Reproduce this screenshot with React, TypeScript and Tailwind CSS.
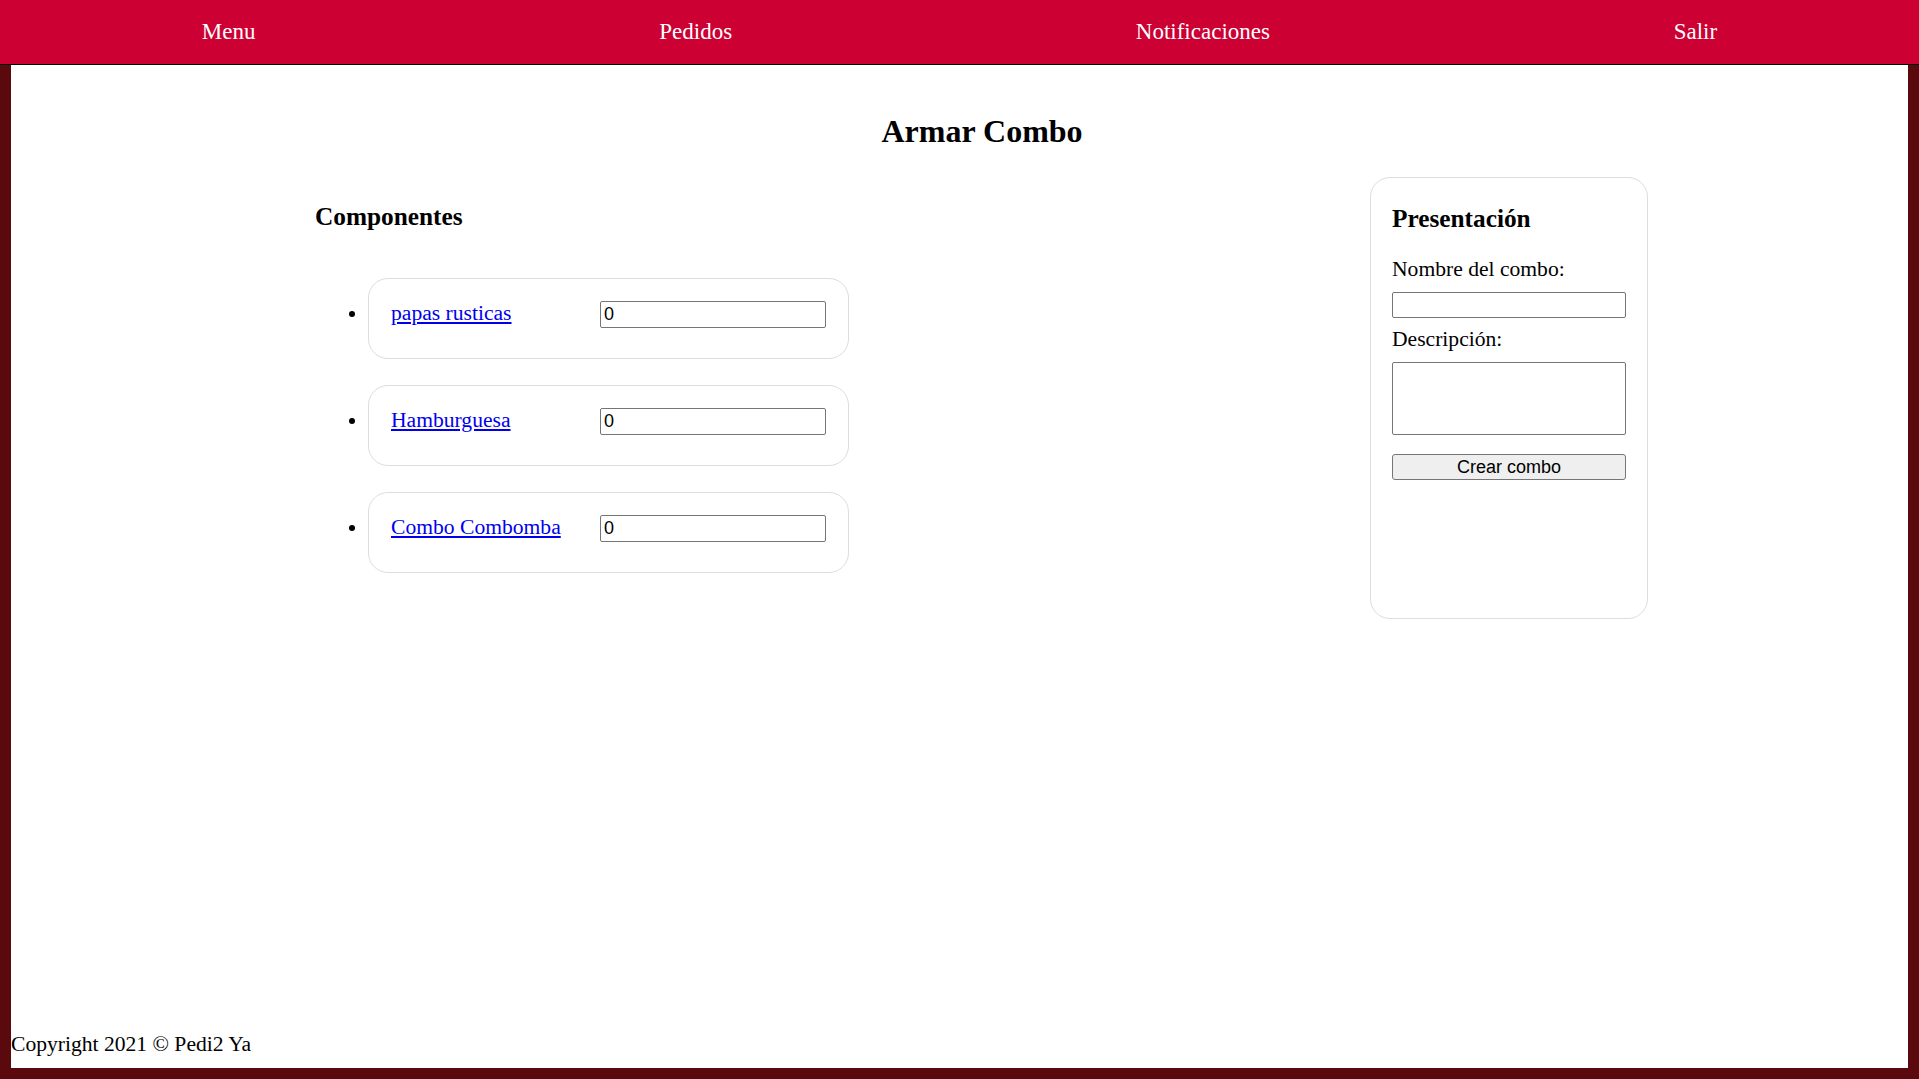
import { useState } from 'react';

const componentes = [
  { id: 1, nombre: 'papas rusticas' },
  { id: 2, nombre: 'Hamburguesa' },
  { id: 3, nombre: 'Combo Combomba' },
];

const sans = "font-['Liberation_Sans',Arial,sans-serif]";

function NavBar() {
  return (
    <nav className="h-[65px] shrink-0 bg-[#cc0033] border-b border-black flex justify-around items-center text-white text-[23px] leading-[26px]">
      <a href="#">Menu</a>
      <a href="#">Pedidos</a>
      <a href="#">Notificaciones</a>
      <a href="#">Salir</a>
    </nav>
  );
}

function ComponenteItem({ nombre }: { nombre: string }) {
  const [cantidad, setCantidad] = useState('0');
  return (
    <li className="flex items-start">
      <span className="ml-[34px] mt-[33px] mr-[13px] w-[6px] h-[6px] rounded-full bg-black shrink-0" />
      <div className="w-[481px] h-[81px] border border-[#dddddd] rounded-[20px] pl-[22px] pt-[22px]">
        <div className="flex items-baseline">
          <a href="#" className="w-[209px] shrink-0 text-[#0000ee] underline text-[21.6px] leading-[25px]">
            {nombre}
          </a>
          <input
            type="text"
            value={cantidad}
            onChange={e => setCantidad(e.target.value)}
            className={`${sans} w-[226px] h-[27px] border border-[#767676] rounded-[2px] px-[3px] text-[18px] text-black outline-none`}
          />
        </div>
      </div>
    </li>
  );
}

function Presentacion() {
  return (
    <div className="w-[278px] h-[442px] shrink-0 border border-[#dddddd] rounded-[20px] px-[21px] pt-[26px]">
      <h2 className="text-[25.3px] font-bold leading-[29px]">Presentación</h2>
      <label className="block mt-[24px] text-[21.6px] leading-[25px]">Nombre del combo:</label>
      <input
        type="text"
        className={`${sans} block mt-[10px] w-full h-[26px] border border-[#767676] rounded-[2px] px-[3px] text-[18px] outline-none`}
      />
      <label className="block mt-[9px] text-[21.6px] leading-[25px]">Descripción:</label>
      <textarea
        className={`${sans} block mt-[10px] w-full h-[73px] border border-[#767676] rounded-[2px] px-[3px] text-[18px] outline-none resize-none`}
      />
      <button
        type="button"
        className={`${sans} block mt-[19px] w-full h-[26px] bg-[#efefef] border border-[#767676] rounded-[3px] text-[18px] leading-[20px] text-black`}
      >
        Crear combo
      </button>
    </div>
  );
}

export default function App() {
  return (
    <div className="min-h-screen flex flex-col bg-[#5a0a0c] font-['Liberation_Serif','Times_New_Roman',serif] text-black">
      <NavBar />
      <main className="flex-1 mx-[11px] mb-[11px] bg-white flex flex-col">
        <h1 className="mt-[48px] pl-[45px] text-center text-[32px] font-bold leading-[37px]">Armar Combo</h1>
        <div className="mt-[27px] flex">
          <section className="w-[1359px] shrink-0 pl-[304px] pt-[25px]">
            <h2 className="text-[25.3px] font-bold leading-[29px]">Componentes</h2>
            <ul className="mt-[47px] flex flex-col gap-[26px]">
              {componentes.map(c => (
                <ComponenteItem key={c.id} nombre={c.nombre} />
              ))}
            </ul>
          </section>
          <Presentacion />
        </div>
        <footer className="mt-auto pb-[11px] text-[21.6px] leading-[25px]">Copyright 2021 © Pedi2 Ya</footer>
      </main>
    </div>
  );
}
